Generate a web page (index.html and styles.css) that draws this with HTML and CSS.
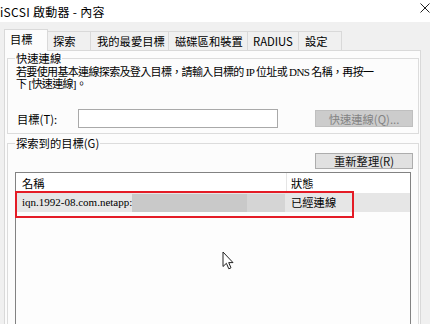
FILE: index.html
```html
<!DOCTYPE html>
<html lang="zh-Hant">
<head>
    <meta charset="UTF-8">
    <title>iSCSI 啟動器 - 內容</title>
    <link rel="stylesheet" href="styles.css">
</head>
<body>
    <div class="window">
        <div class="titlebar">
            <span class="title">iSCSI 啟動器 - 內容</span>
            <svg class="close" viewBox="0 0 10 10" width="10" height="10">
                <path d="M0.5 0.5 L9.5 9.5 M9.5 0.5 L0.5 9.5" stroke="#222" stroke-width="1" fill="none"/>
            </svg>
        </div>
        <div class="client">
            <div class="tabs">
                <div class="tab active tab-targets">目標</div>
                <div class="tab tab-discovery">探索</div>
                <div class="tab tab-favorites">我的最愛目標</div>
                <div class="tab tab-volumes">磁碟區和裝置</div>
                <div class="tab tab-radius">RADIUS</div>
                <div class="tab tab-config">設定</div>
            </div>
            <div class="panel">
                <fieldset class="group quick">
                    <legend>快速連線</legend>
                    <p class="hint">若要使用基本連線探索及登入目標，請輸入目標的 IP 位址或 DNS 名稱，再按一<br>下 [快速連線]。</p>
                    <div class="quick-row">
                        <label for="target">目標(T):</label>
                        <input id="target" type="text">
                        <button class="quick-btn" type="button" disabled>快速連線(Q)...</button>
                    </div>
                </fieldset>
                <fieldset class="group found">
                    <legend>探索到的目標(G)</legend>
                    <button class="refresh" type="button">重新整理(R)</button>
                    <div class="listview">
                        <div class="lv-header">
                            <span class="col-name">名稱</span>
                            <span class="col-status">狀態</span>
                        </div>
                        <div class="lv-row">
                            <span class="col-name iqn">iqn.1992-08.com.netapp:<span class="redact"></span><span class="redact light"></span></span>
                            <span class="col-status">已經連線</span>
                        </div>
                        <div class="highlight"></div>
                    </div>
                </fieldset>
            </div>
        </div>
        <svg class="cursor" viewBox="0 0 13 19" width="13" height="19">
            <path d="M1 1 V15.5 L4.4 12.3 L6.8 17.8 L9 16.8 L6.7 11.6 H11 Z" fill="#fff" stroke="#222" stroke-width="1" stroke-linejoin="round"/>
        </svg>
    </div>
</body>
</html>
```

FILE: styles.css
```css
body {
    margin: 0;
    background-color: #f0f0f0;
    font-family: "Noto Sans CJK TC", sans-serif;
    font-size: 11.3px;
    color: #000;
}

.window {
    position: relative;
    width: 430px;
    height: 324px;
    overflow: hidden;
}

/* title bar */
.titlebar {
    display: flex;
    justify-content: space-between;
    height: 22px;
    background: #fff;
}

.title {
    font-size: 12px;
    letter-spacing: 0.3px;
    line-height: 21px;
    padding-top: 1px;
}

.close {
    margin-top: 3px;
}

/* tabs */
.client {
    padding: 9px 0 0 4px;
}

.tabs {
    display: flex;
    align-items: flex-start;
    height: 19px;
}

.tab {
    box-sizing: border-box;
    height: 19px;
    margin-right: -1px;
    padding-left: 5px;
    border: 1px solid #d9d9d9;
    border-bottom: none;
    background: #f0f0f0;
    line-height: 18px;
}

.tab.active {
    position: relative;
    z-index: 1;
    height: 22px;
    margin-top: -2px;
    background: #fcfcfc;
    line-height: 19px;
}

.tab-targets { width: 44px; }
.tab-discovery { width: 44px; }
.tab-favorites { width: 79px; padding-left: 6px; }
.tab-volumes { width: 80px; padding-left: 6px; }
.tab-radius { width: 52px; }
.tab-config { width: 44px; padding-left: 6px; }

.panel {
    box-sizing: border-box;
    width: 417px;
    height: 280px;
    padding: 0 1px 0 2px;
    border: 1px solid #d9d9d9;
    background: #fcfcfc;
}

/* group boxes */
.group {
    margin: 0;
    padding: 0;
    min-width: 0;
    border: 1px solid #dcdcdc;
}

.group legend {
    margin-left: 7px;
    padding: 0 1px;
    line-height: 14px;
}

.hint {
    margin: 1px 0 0 8px;
    font-family: "Liberation Serif", "Noto Sans CJK TC", serif;
    font-size: 11px;
    letter-spacing: -0.65px;
    line-height: 12px;
    white-space: nowrap;
}

.quick-row {
    display: flex;
    align-items: center;
    margin: 19px 0 5px;
}

.quick-row label {
    box-sizing: border-box;
    width: 70px;
    padding-left: 9px;
}

.quick-row input {
    box-sizing: border-box;
    width: 200px;
    height: 19px;
    margin: 0;
    padding: 0;
    border: 1px solid #a9a9a9;
    background: #fff;
}

button {
    box-sizing: border-box;
    padding: 0;
    font-family: inherit;
    font-size: 11.3px;
    line-height: 14px;
    border-radius: 0;
}

.quick-btn {
    width: 98px;
    height: 17px;
    margin-left: 37px;
    border: 1px solid #bfbfbf;
    background: #cccccc;
    color: #838383;
}

.found {
    margin-top: 2px;
}

.refresh {
    display: block;
    width: 98px;
    height: 16px;
    margin: 3px 5px 3px auto;
    border: 1px solid #adadad;
    background: #e1e1e1;
    color: #111;
}

/* list view */
.listview {
    position: relative;
    height: 160px;
    margin: 0 7px;
    border: 1px solid #828282;
    background: #fdfdfd;
}

.lv-header,
.lv-row {
    display: flex;
}

.lv-header {
    height: 20px;
    line-height: 20px;
    background: #fff;
}

.lv-row {
    height: 19px;
    line-height: 19px;
    background: #e6e6e6;
}

.col-name {
    box-sizing: border-box;
    display: flex;
    align-items: center;
    width: 271px;
    padding-left: 6px;
}

.lv-header .col-name {
    border-right: 1px solid #e5e5e5;
}

.col-status {
    padding-left: 4px;
}

.iqn {
    font-family: "Liberation Serif", serif;
    font-size: 11px;
    white-space: nowrap;
}

.redact {
    display: inline-block;
    width: 115px;
    height: 18px;
    background: #c9c9c9;
}

.redact.light {
    width: 38px;
    background: #d5d5d5;
}

.highlight {
    position: absolute;
    left: -1px;
    top: 18px;
    box-sizing: border-box;
    width: 339px;
    height: 27px;
    border: 2px solid #e41c26;
}

.cursor {
    position: absolute;
    left: 222px;
    top: 251px;
}
```
